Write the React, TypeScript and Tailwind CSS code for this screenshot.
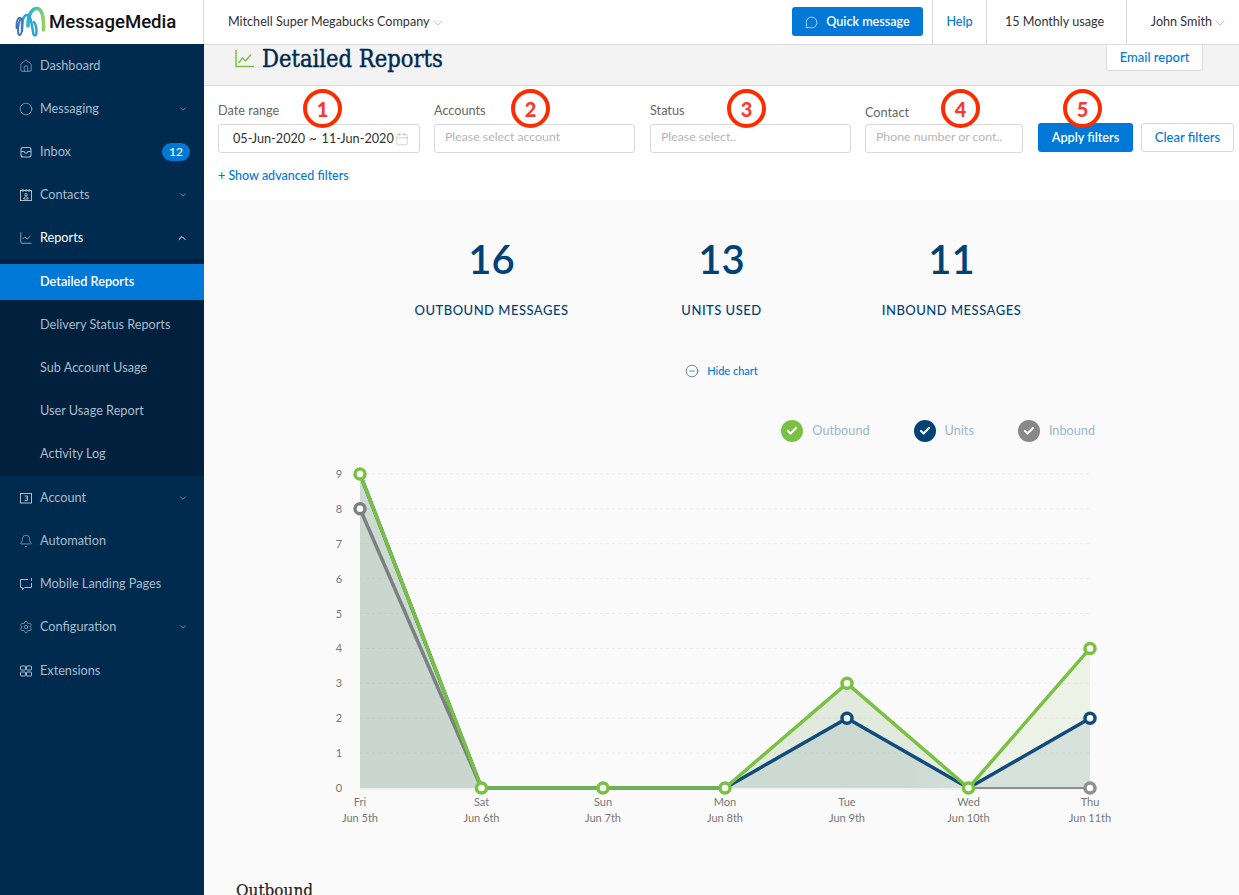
import {
  House,
  Circle,
  ChartLine,
  Bell,
  Settings,
  ChevronDown,
  ChevronUp,
  Calendar,
  CircleMinus,
  Check,
  MessageCircle,
} from "lucide-react";
import type { ReactNode } from "react";

const lato = { fontFamily: "Lato, sans-serif" };
const slab = { fontFamily: '"DejaVu Serif Condensed", "DejaVu Serif", serif' };

function AccountIcon() {
  return (
    <svg width="14" height="14" viewBox="0 0 14 14" fill="none" stroke="currentColor" strokeWidth="1">
      <rect x="1.500" y="2.500" width="11" height="9.500" />
      <path d="M5.500 5h3v4.500h-3M6.500 7.200h2" />
    </svg>
  );
}

function InboxIcon() {
  return (
    <svg width="14" height="14" viewBox="0 0 14 14" fill="none" stroke="currentColor" strokeWidth="1.100">
      <rect x="2" y="2.500" width="10" height="9.500" rx="2" />
      <path d="M2 6.500h3l1 1.500h2l1-1.500h3" />
    </svg>
  );
}

function ContactIcon() {
  return (
    <svg width="14" height="14" viewBox="0 0 14 14" fill="none" stroke="currentColor" strokeWidth="1">
      <rect x="1.500" y="2.500" width="11" height="10" />
      <path d="M4 1v3M7 1v3M10 1v3" />
      <circle cx="7" cy="6.800" r="1.300" />
      <path d="M4.800 11c0-3 4.400-3 4.400 0z" />
    </svg>
  );
}

function LandingIcon() {
  return (
    <svg width="14" height="14" viewBox="0 0 14 14" fill="none" stroke="currentColor" strokeWidth="1">
      <path d="M9 2.500H1.500v8h2v2l2-2h7V6" />
      <path d="M12.500 1v3" />
    </svg>
  );
}

function ExtensionsIcon() {
  return (
    <svg width="14" height="14" viewBox="0 0 14 14" fill="none" stroke="currentColor" strokeWidth="1">
      <rect x="1.500" y="2" width="5" height="4" rx="0.500" />
      <rect x="7.500" y="2" width="5" height="4" rx="0.500" />
      <rect x="1.500" y="8" width="5" height="4" rx="0.500" />
      <rect x="7.500" y="8" width="5" height="4" rx="0.500" />
    </svg>
  );
}

function TitleIcon() {
  return (
    <svg width="19" height="18" viewBox="0 0 19 18" fill="none" stroke="#7ac143" strokeWidth="1.500">
      <path d="M1 0v16.500h18" />
      <path d="M3.500 13l4-5 3 3 5.500-6.500" />
    </svg>
  );
}

function NavRow({
  icon,
  label,
  chevron,
  badge,
  active,
  className,
}: {
  icon: ReactNode;
  label: string;
  chevron?: "up" | "down";
  badge?: string;
  active?: boolean;
  className?: string;
}) {
  return (
    <div className={`flex h-[43px] items-center pr-4 pl-[19px] text-[12.7px] ${active ? "text-white" : "text-[#a9bccb]"} ${className ?? ""}`}>
      <span className={`flex w-[21px] shrink-0 items-center ${active ? "text-[#d5dee6]" : "text-[#a9bccb]"}`}>{icon}</span>
      <span className="flex-1">{label}</span>
      {chevron === "down" && <ChevronDown size={10} className="text-[#7f99ae]" />}
      {chevron === "up" && <ChevronUp size={12} className="text-white" />}
      {badge && (
        <span className="-mr-[2px] rounded-full bg-[#0078d7] px-[7px] text-[12px] leading-[18px] font-medium text-white">{badge}</span>
      )}
    </div>
  );
}

function Sidebar() {
  const sub = ["Delivery Status Reports", "Sub Account Usage", "User Usage Report", "Activity Log"];
  return (
    <aside className="w-[204px] shrink-0 bg-[#002b4f]">
      <NavRow icon={<House size={14} strokeWidth={1.1} />} label="Dashboard" />
      <NavRow icon={<Circle size={14} strokeWidth={1.1} />} label="Messaging" chevron="down" />
      <NavRow icon={<InboxIcon />} label="Inbox" badge="12" />
      <NavRow icon={<ContactIcon />} label="Contacts" chevron="down" />
      <NavRow icon={<ChartLine size={14} strokeWidth={1.1} />} label="Reports" chevron="up" active />
      <div className="bg-[#00203d] pt-[5px] pb-[1px]">
        <div className="mb-[3px] flex h-[36px] items-center bg-[#0078d7] pl-[40px] text-[12.7px] font-semibold text-white">
          Detailed Reports
        </div>
        {sub.map((item) => (
          <div key={item} className="flex h-[43px] items-center pl-[40px] text-[12.7px] text-[#a9bccb]">
            {item}
          </div>
        ))}
      </div>
      <NavRow icon={<AccountIcon />} label="Account" chevron="down" />
      <NavRow icon={<Bell size={14} strokeWidth={1.1} />} label="Automation" />
      <NavRow icon={<LandingIcon />} label="Mobile Landing Pages" />
      <NavRow icon={<Settings size={14} strokeWidth={1.1} />} label="Configuration" chevron="down" />
      <NavRow icon={<ExtensionsIcon />} label="Extensions" className="mt-[1px]" />
    </aside>
  );
}

function Logo() {
  return (
    <svg width="32" height="32" viewBox="0 0 32 32" fill="none" strokeLinecap="round" className="shrink-0">
      <defs>
        <linearGradient id="arch" x1="0" y1="0" x2="1" y2="0">
          <stop offset="0" stopColor="#2fb6c4" />
          <stop offset="0.5" stopColor="#3fc4a2" />
          <stop offset="1" stopColor="#93cf62" />
        </linearGradient>
      </defs>
      <path d="M14 20C14 8 18 2.500 23 2.500C28 2.500 30 11 29.500 24" stroke="url(#arch)" strokeWidth="3.600" />
      <path d="M8 25C7 15 10 9 13 9C17 9 18 20 19 26C19.500 30.500 22.500 30.500 22.500 26C22.500 21 21.500 18 20 16" stroke="#2ba3d8" strokeWidth="2.400" />
      <path d="M2.500 22C2 15 4 11 6.500 12C10 13 8.500 29 5.500 29C3 29 4 18 6 14" stroke="#3f6fb5" strokeWidth="1.900" />
    </svg>
  );
}

function TopBar() {
  return (
    <header className="flex h-[44px] shrink-0 bg-white text-[12.6px] text-[#333]">
      <div className="flex w-[204px] shrink-0 items-center gap-[3px] border-r border-[#d9d9d9] pl-[14px]">
        <Logo />
        <span className="text-[18.6px] leading-none font-medium text-[#111]" style={{ fontFamily: "Roboto, sans-serif" }}>
          MessageMedia
        </span>
      </div>
      <div className="flex flex-1 items-center pt-[1px] pl-[24px]">
        Mitchell Super Megabucks Company
        <ChevronDown size={16} strokeWidth={0.8} className="text-[#888]" />
      </div>
      <div className="flex items-center pr-[9px] pb-[1px]">
        <button className="flex h-[29px] w-[131px] items-center justify-center gap-[8px] rounded-[3px] bg-[#0078d7] pt-[1px] font-semibold text-white">
          <MessageCircle size={13} strokeWidth={1.2} />
          Quick message
        </button>
      </div>
      <div className="flex w-[54px] items-center justify-center border-l border-[#d9d9d9] font-medium text-[#0078d7]">Help</div>
      <div className="flex w-[140px] items-center justify-center border-l border-[#d9d9d9] pt-[1px] pr-[4px]">15 Monthly usage</div>
      <div className="flex max-w-[113px] flex-1 items-center justify-end border-l border-[#d9d9d9] pt-[1px] pr-[11px]">
        John Smith
        <ChevronDown size={16} strokeWidth={0.8} className="text-[#888]" />
      </div>
    </header>
  );
}

function Marker({ n, className }: { n: number; className: string }) {
  return (
    <span
      className={`absolute flex h-[39px] w-[39px] items-center justify-center rounded-full border-[4px] border-[#fb2c00] bg-white text-[20px] font-black text-[#f63b34] ${className}`}
    >
      {n}
    </span>
  );
}

function Field({
  label,
  width,
  placeholder,
  labelClass,
  marker,
  children,
}: {
  label: string;
  width: string;
  placeholder?: string;
  labelClass?: string;
  marker: ReactNode;
  children?: ReactNode;
}) {
  return (
    <div className={`relative flex flex-col ${width}`}>
      <div className={`h-[33px] pt-[15px] text-[12.7px] leading-[18px] text-[#666] ${labelClass ?? ""}`}>{label}</div>
      {marker}
      <div className="mt-[5px] flex h-[29px] items-center rounded-[3px] border border-[#d9d9d9] bg-white px-[10px] text-[12.3px]">
        {placeholder && <span className="pb-[2px] text-[#b5b5b5]">{placeholder}</span>}
        {children}
      </div>
    </div>
  );
}

function Filters() {
  return (
    <section className="h-[114px] shrink-0 bg-white pl-[14px]">
      <div className="flex">
        <div className="mr-[14px]">
          <Field label="Date range" width="w-[202px]" marker={<Marker n={1} className="top-[3px] left-[85px]" />}>
            <div className="ml-[4px] flex gap-[4px] text-[12.7px] text-[#333]">
              <span>05-Jun-2020</span>
              <span>~</span>
              <span className="ml-[1px]">11-Jun-2020</span>
            </div>
            <Calendar size={14} strokeWidth={1} className="ml-[1px] shrink-0 text-[#b5b5b5]" />
          </Field>
        </div>
        <div className="mr-[15px]">
          <Field label="Accounts" width="w-[201px]" placeholder="Please select account" marker={<Marker n={2} className="top-[3px] left-[77px]" />} />
        </div>
        <div className="mr-[14px]">
          <Field label="Status" width="w-[201px]" placeholder="Please select.." marker={<Marker n={3} className="top-[3px] left-[77px]" />} />
        </div>
        <div className="mr-[15px]">
          <Field
            label="Contact"
            width="w-[158px]"
            placeholder="Phone number or cont.."
            labelClass="translate-y-[2px]"
            marker={<Marker n={4} className="top-[3px] left-[76px]" />}
          />
        </div>
        <div className="relative flex items-end gap-[8px] pb-[1px]">
          <Marker n={5} className="top-[3px] left-[25px]" />
          <button className="h-[29px] w-[95px] rounded-[3px] bg-[#0078d7] text-[12.7px] font-semibold text-white">Apply filters</button>
          <button className="h-[29px] w-[93px] rounded-[3px] border border-[#d9d9d9] bg-white text-[13px] font-medium text-[#0078d7]">
            Clear filters
          </button>
        </div>
      </div>
      <div className="mt-[14px] text-[12.5px] font-medium text-[#0078d7]">+ Show advanced filters</div>
    </section>
  );
}

function Stat({ value, label }: { value: string; label: string }) {
  return (
    <div className="flex flex-col items-center text-[#004276]">
      <div className="text-[40px] leading-[48px] font-semibold">{value}</div>
      <div className="mt-[18px] text-[13px] leading-[18px] font-medium tracking-[0.5px] uppercase">{label}</div>
    </div>
  );
}

function LegendItem({ color, label, className }: { color: string; label: string; className: string }) {
  return (
    <div className={`flex items-center gap-[9px] ${className}`}>
      <span className={`flex h-[22px] w-[22px] items-center justify-center rounded-full ${color}`}>
        <Check size={12} strokeWidth={4.5} className="text-white" />
      </span>
      <span className="text-[12.7px] text-[#9db6cc]">{label}</span>
    </div>
  );
}

const xs = [360, 481.5, 603, 725, 847, 968.5, 1090];
const y = (v: number) => 788 - v * 34.9;
const pts = (data: number[]) => data.map((v, i) => `${xs[i]},${y(v)}`).join(" ");
const area = (data: number[]) => `${xs[0]},${y(0)} ${pts(data)} ${xs[6]},${y(0)}`;

const outbound = [9, 0, 0, 0, 3, 0, 4];
const units = [9, 0, 0, 0, 2, 0, 2];
const inbound = [8, 0, 0, 0, 0, 0, 0];
const days = [
  ["Fri", "Jun 5th"],
  ["Sat", "Jun 6th"],
  ["Sun", "Jun 7th"],
  ["Mon", "Jun 8th"],
  ["Tue", "Jun 9th"],
  ["Wed", "Jun 10th"],
  ["Thu", "Jun 11th"],
];

function Chart() {
  return (
    <svg width="1035" height="375" viewBox="204 460 1035 375" className="block" style={lato}>
      <defs>
        <linearGradient id="greenFill" gradientUnits="userSpaceOnUse" x1="360" y1="0" x2="1090" y2="0">
          <stop offset="0" stopColor="#7daa64" stopOpacity="0.2" />
          <stop offset="0.75" stopColor="#7daa64" stopOpacity="0.2" />
          <stop offset="0.85" stopColor="#7db040" stopOpacity="0.1" />
          <stop offset="1" stopColor="#7db040" stopOpacity="0.1" />
        </linearGradient>
      </defs>
      {[1, 2, 3, 4, 5, 6, 7, 8, 9].map((v) => (
        <line key={v} x1="360" x2="1090" y1={y(v)} y2={y(v)} stroke="#eeeeee" strokeDasharray="3 3" />
      ))}
      <line x1="360" x2="1090" y1={y(0) + 1} y2={y(0) + 1} stroke="#e8e8e8" />
      <polygon points={area(outbound)} fill="url(#greenFill)" />
      <polygon points={area(units)} fill="#0f4c7c" fillOpacity="0.1" />
      <polygon points={area(inbound)} fill="#888888" fillOpacity="0.03" />
      {[0, 1, 2, 3, 4, 5, 6, 7, 8, 9].map((v) => (
        <text key={v} x="339" y={y(v) + 4} textAnchor="middle" fontSize="11" fill="#777">
          {v}
        </text>
      ))}
      {days.map(([d, date], i) => (
        <g key={d} textAnchor="middle" fontSize="11" fill="#777">
          <text x={xs[i]} y="806">
            {d}
          </text>
          <text x={xs[i]} y="822">
            {date}
          </text>
        </g>
      ))}
      <line x1={xs[0]} y1={y(8)} x2={xs[1]} y2={y(0)} stroke="#7b8080" strokeWidth="3.500" />
      <line x1={xs[5]} y1={y(0)} x2={xs[6]} y2={y(0)} stroke="#8f8f8f" strokeWidth="2" />
      <polyline points={pts(units)} fill="none" stroke="#0f4c7c" strokeWidth="3.500" />
      <polyline points={pts(outbound)} fill="none" stroke="#7ac143" strokeWidth="3.500" />
      <line x1={xs[1]} y1={y(0)} x2={xs[3]} y2={y(0)} stroke="#6eb05a" strokeWidth="3" />
      <circle cx={xs[0]} cy={y(8)} r="5" fill="white" stroke="#7b8080" strokeWidth="3.500" />
      <circle cx={xs[6]} cy={y(0)} r="5" fill="white" stroke="#8f8f8f" strokeWidth="3.500" />
      <circle cx={xs[4]} cy={y(2)} r="5" fill="white" stroke="#0f4c7c" strokeWidth="3.500" />
      <circle cx={xs[6]} cy={y(2)} r="5" fill="white" stroke="#0f4c7c" strokeWidth="3.500" />
      {outbound.map((v, i) => (
        <circle key={i} cx={xs[i]} cy={y(v)} r="5" fill="white" stroke="#7ac143" strokeWidth="3.500" />
      ))}
    </svg>
  );
}

export default function App() {
  return (
    <div className="flex h-[895px] w-[1239px] flex-col overflow-hidden bg-white" style={lato}>
      <TopBar />
      <div className="flex min-h-0 flex-1">
        <Sidebar />
        <main className="flex min-w-0 flex-1 flex-col bg-[#fafafa]">
          <div className="flex h-[42px] shrink-0 items-start justify-between border-y border-[#dcdcdc] bg-[#f3f3f3] pr-[36px] pl-[31px]">
            <div className="flex items-center gap-[8px]">
              <TitleIcon />
              <h1 className="text-[23.500px] leading-[28px] font-normal text-[#00294d] [-webkit-text-stroke:0.4px_#00294d]" style={slab}>
                Detailed Reports
              </h1>
            </div>
            <button className="h-[26px] w-[97px] rounded-b-[3px] border border-t-0 border-[#dcdcdc] bg-white text-[13px] font-medium text-[#0078d7]">
              Email report
            </button>
          </div>
          <Filters />
          <div className="mx-auto mt-[35px] grid w-[690px] shrink-0 grid-cols-3">
            <Stat value="16" label="Outbound messages" />
            <Stat value="13" label="Units used" />
            <Stat value="11" label="Inbound messages" />
          </div>
          <div className="mt-[44px] flex items-center justify-center gap-[8px] text-[11px] font-medium text-[#0078d7]">
            <CircleMinus size={14} strokeWidth={1} className="text-[#004276]" />
            Hide chart
          </div>
          <div className="mt-[40px] flex justify-end pr-[144px]">
            <LegendItem color="bg-[#7ac143]" label="Outbound" className="mr-[44px]" />
            <LegendItem color="bg-[#004276]" label="Units" className="mr-[44px]" />
            <LegendItem color="bg-[#888888]" label="Inbound" className="" />
          </div>
          <div className="mt-[18px] shrink-0">
            <Chart />
          </div>
          <h2 className="mt-[45px] pl-[32px] text-[17px] leading-[20px] text-[#222] [-webkit-text-stroke:0.2px_#222]" style={slab}>
            Outbound
          </h2>
        </main>
      </div>
    </div>
  );
}
